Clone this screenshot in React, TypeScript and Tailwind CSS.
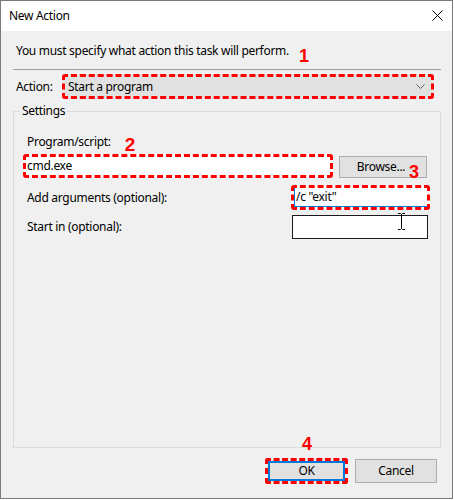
export default function App() {
  return (
    <div className="w-[454px] h-[500px] bg-white font-['Noto_Sans',sans-serif] text-[12px] tracking-[-0.3px] text-black leading-[16px]">
      <div className="w-[453px] h-[499px] border border-[#7a7a7a] flex flex-col bg-[#f0f0f0]">
        {/* Title bar */}
        <div className="h-[30px] bg-white flex items-center justify-between pl-[8px] pr-[9px] shrink-0">
          <span>New Action</span>
          <svg width="11" height="11" viewBox="0 0 11 11" className="mb-[1px]">
            <path d="M0.5 0.5 L10.5 10.5 M10.5 0.5 L0.5 10.5" stroke="#000" strokeWidth="1" fill="none" />
          </svg>
        </div>

        {/* Body */}
        <div className="flex-1 flex flex-col">
          <div className="mt-[12px] ml-[15px] h-[16px] flex items-center">
            <span>You must specify what action this task will perform.</span>
            <span className="ml-[10px] font-['Liberation_Sans',sans-serif] font-bold text-[18px] tracking-normal text-[#f00] leading-[16px] mt-[9px]">1</span>
          </div>
          <div className="mt-[10px] ml-[12px] w-[428px] h-px bg-[#a0a0a0]" />

          {/* Action row */}
          <div className="mt-[4px] flex items-center h-[25px]">
            <span className="ml-[15px] w-[46px]">Action:</span>
            <div className="w-[372px] h-[25px] border-[3px] border-dashed border-[#f00] rounded-[3px] bg-[#e1e1e1] flex items-center justify-between pl-[3px] pr-[6px]">
              <span>Start a program</span>
              <svg width="9" height="5" viewBox="0 0 9 5">
                <path d="M0.5 0.5 L4.5 4.5 L8.5 0.5" stroke="#606060" strokeWidth="1" fill="none" />
              </svg>
            </div>
          </div>

          {/* Settings group */}
          <fieldset className="mt-[4px] ml-[12px] w-[428px] h-[345px] border border-[#dcdcdc] flex flex-col">
            <legend className="ml-[6px] px-[2px] leading-[16px]">Settings</legend>

            <div className="mt-[15px] ml-[13px] h-[16px] flex items-center">
              <span>Program/script:</span>
              <span className="ml-[14px] font-['Liberation_Sans',sans-serif] font-bold text-[19px] tracking-normal text-[#f00] leading-[16px] mt-[5px]">2</span>
            </div>

            <div className="mt-[4px] flex items-center">
              <div className="ml-[9px] w-[310px] h-[24px] border-[3px] border-dashed border-[#f00] rounded-[3px] bg-white flex items-center pl-[1px]">
                <span>cmd.exe</span>
              </div>
              <div className="relative ml-[6px] mt-[1px] w-[88px] h-[22px] border border-[#adadad] bg-[#e1e1e1] flex items-center justify-center">
                <span className="mr-[4px]">Browse...</span>
                <span className="absolute left-[69px] top-[7px] font-['Liberation_Sans',sans-serif] font-bold text-[18px] tracking-normal text-[#f00] leading-[16px]">3</span>
              </div>
            </div>

            <div className="mt-[7px] flex items-center justify-between">
              <span className="ml-[13px]">Add arguments (optional):</span>
              <div className="mr-[10px] w-[139px] h-[25px] border-[3px] border-dashed border-[#f00] rounded-[3px] bg-white">
                <div className="w-full h-full border-l border-b border-[#0078d7] flex items-center pl-[1px]">
                  <span>/c "exit"</span>
                </div>
              </div>
            </div>

            <div className="mt-[5px] flex items-center justify-between">
              <span className="ml-[13px]">Start in (optional):</span>
              <div className="relative mr-[12px] w-[136px] h-[24px] border border-[#1a1a1a] bg-white">
                <svg width="9" height="17" viewBox="0 0 9 17" className="absolute left-[104px] top-[-3px]">
                  <path d="M1 0.5 H3.5 L4.5 1.5 L5.5 0.5 H8 M4.5 1.5 V15.5 M1 16.5 H3.5 L4.5 15.5 L5.5 16.5 H8" stroke="#000" strokeWidth="1" fill="none" />
                </svg>
              </div>
            </div>
          </fieldset>

          {/* Buttons */}
          <div className="mt-[10px] flex justify-end items-center pr-[15px]">
            <div className="relative w-[83px] h-[26px] border-[3px] border-dashed border-[#f00] rounded-[3px]">
              <span className="absolute left-[34px] top-[-25px] font-['Liberation_Sans',sans-serif] font-bold text-[18px] tracking-normal text-[#f00] leading-[16px]">4</span>
              <div className="w-full h-full border-2 border-[#0078d7] bg-[#e1e1e1] flex items-center justify-center">
                <span>OK</span>
              </div>
            </div>
            <div className="ml-[7px] w-[82px] h-[24px] border border-[#adadad] bg-[#e1e1e1] flex items-center justify-center">
              <span>Cancel</span>
            </div>
          </div>
        </div>
      </div>
    </div>
  );
}
